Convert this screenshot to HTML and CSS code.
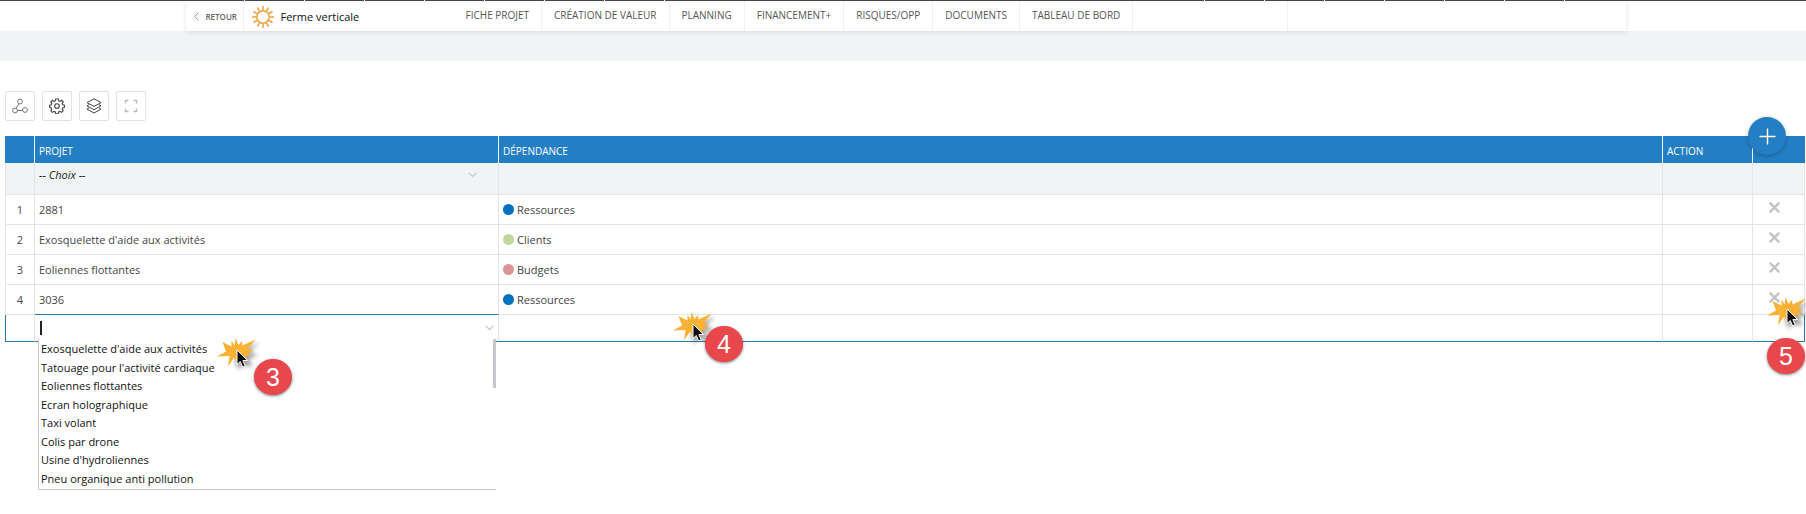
FILE: index.html
```html
<!DOCTYPE html>
<html lang="fr">
<head>
<meta charset="utf-8">
<title>Ferme verticale</title>
<link rel="stylesheet" href="styles.css">
</head>
<body>
<svg class="defs" aria-hidden="true">
  <defs>
    <symbol id="chevron" viewBox="0 0 9 6"><path d="M0.7 0.7 4.5 4.5 8.3 0.7" fill="none" stroke="#c9ced1" stroke-width="1.4"/></symbol>
    <symbol id="cross" viewBox="0 0 11 11"><path d="M1.4 1.4 9.6 9.6M9.6 1.4 1.4 9.6" fill="none" stroke="#c3c3c3" stroke-width="2.4" stroke-linecap="round"/></symbol>
    <symbol id="click" viewBox="0 0 48 38">
      <path d="M20 12 42 5 32 14 41 17 31 21 36 28 24 28 22 32 18 24Z" fill="#555" opacity=".55" filter="url(#soft)"/>
      <path d="M0 18.500 9 13.500 5.500 4 14.500 8.500 14.500 2.500 17.500 7.500 18.500 0 21.500 7 25 3 25.500 7.500 38.500 1.500 31 10.500 36.500 13 31 14 34 18 28.500 17.500 30 21 22 21 19.500 23.500 17 19.500 11 28.500 12.500 18Z" fill="#f9b233"/>
      <path d="M20 12V26.500L23.300 23.500 25.700 29 28.200 27.900 25.900 22.500H30.500Z" fill="#0b0b0b" stroke="#fff" stroke-width="1"/>
    </symbol>
    <filter id="soft" x="-30%" y="-30%" width="160%" height="160%"><feGaussianBlur stdDeviation="2"/></filter>
  </defs>
</svg>

<header class="header">
  <div class="ticks"><span class="ticks-left"></span><span class="ticks-right"></span></div>
  <div class="topbar">
    <a class="back" href="#"><svg viewBox="0 0 5 9" width="5" height="9" aria-hidden="true"><path d="M4.500 0.500 0.700 4.500 4.500 8.500" fill="none" stroke="#888" stroke-width="0.900"/></svg>RETOUR</a>
    <div class="title">
      <svg viewBox="0 0 24 24" width="24" height="24" aria-hidden="true"><g fill="none" stroke="#eaa13e" stroke-width="1.500"><circle cx="12" cy="12" r="6.200"/><path d="M12 5V1M12 19v4M5 12H1M19 12h4M15.500 5.900 17.500 2.500M8.500 18.100 6.500 21.500M5.900 8.500 2.500 6.500M18.100 15.500 21.500 17.500M8.500 5.900 6.500 2.500M15.500 18.100 17.500 21.500M5.900 15.500 2.500 17.500M18.100 8.500 21.500 6.500"/></g></svg>
      <span>Ferme verticale</span>
    </div>
    <nav class="nav">
      <a href="#">FICHE PROJET</a>
      <a href="#">CRÉATION DE VALEUR</a>
      <a href="#">PLANNING</a>
      <a href="#">FINANCEMENT+</a>
      <a href="#">RISQUES/OPP</a>
      <a href="#">DOCUMENTS</a>
      <a href="#">TABLEAU DE BORD</a>
      <span class="nav-blank"></span>
    </nav>
  </div>
</header>
<div class="band"></div>

<main class="main">
  <div class="toolbar">
    <button class="tool" aria-label="Liens"><svg viewBox="0 0 16 16" width="16" height="16"><g fill="none" stroke="#666" stroke-width="0.900"><circle cx="8" cy="3.500" r="2.400"/><circle cx="3" cy="12.500" r="2.400"/><circle cx="13" cy="12" r="2.400"/><path d="M7 5.700 4 10.300M5.400 12.500H10.600"/></g></svg></button>
    <button class="tool" aria-label="Paramètres"><svg viewBox="0 0 16 16" width="16" height="16"><g fill="none" stroke="#444" stroke-width="1.100"><circle cx="8" cy="8" r="2.300"/><path d="M6.700 1h2.600l.4 1.900 1.200.5 1.700-1.100 1.600 1.600-1 1.700.5 1.200 1.800.4v2.200l-1.800.5-.5 1.200 1 1.600-1.600 1.700-1.700-1-1.200.5-.4 1.900H6.700l-.4-1.900-1.200-.5-1.700 1-1.600-1.700 1-1.600-.5-1.200L.6 9.400V7.200l1.700-.4.500-1.200-1-1.700 1.600-1.600 1.700 1.100 1.200-.5Z"/></g></svg></button>
    <button class="tool" aria-label="Calques"><svg viewBox="0 0 16 16" width="16" height="16"><g fill="none" stroke="#444" stroke-width="1"><path d="M8 .8 15 4.600 8 8.400 1 4.600Z"/><path d="M3 6.600 1 7.900 8 11.700 15 7.900 13 6.600M3 9.900 1 11.200 8 15 15 11.200 13 9.900"/></g></svg></button>
    <button class="tool" aria-label="Plein écran"><svg viewBox="0 0 14 14" width="14" height="14"><path d="M1.500 4.500v-3h3M9.500 1.500h3v3M12.500 9.500v3h-3M4.500 12.500h-3v-3" fill="none" stroke="#bbb" stroke-width="1.400"/></svg></button>
  </div>

  <div class="grid">
    <button class="add" aria-label="Ajouter"><svg viewBox="0 0 17 17" width="17" height="17"><path d="M8.500 0.500v16M0.500 8.500h16" stroke="#fff" stroke-width="1.400"/></svg></button>
    <table class="table">
      <colgroup><col class="c-num"><col class="c-project"><col><col class="c-action"><col class="c-del"></colgroup>
      <thead>
        <tr><th></th><th>PROJET</th><th>DÉPENDANCE</th><th>ACTION</th><th></th></tr>
      </thead>
      <tbody>
        <tr class="filter">
          <td></td>
          <td><div class="pick"><select aria-label="Projet"><option>-- Choix --</option></select><svg class="chevron"><use href="#chevron"/></svg></div></td>
          <td></td><td></td><td></td>
        </tr>
        <tr><td class="num">1</td><td>2881</td><td><span class="tag"><i class="dot blue"></i>Ressources</span></td><td></td><td><button class="del" aria-label="Supprimer"><svg><use href="#cross"/></svg></button></td></tr>
        <tr><td class="num">2</td><td>Exosquelette d'aide aux activités</td><td><span class="tag"><i class="dot green"></i>Clients</span></td><td></td><td><button class="del" aria-label="Supprimer"><svg><use href="#cross"/></svg></button></td></tr>
        <tr><td class="num">3</td><td>Eoliennes flottantes</td><td><span class="tag"><i class="dot pink"></i>Budgets</span></td><td></td><td><button class="del" aria-label="Supprimer"><svg><use href="#cross"/></svg></button></td></tr>
        <tr class="last"><td class="num">4</td><td>3036</td><td><span class="tag"><i class="dot blue"></i>Ressources</span></td><td></td><td><button class="del" aria-label="Supprimer"><svg><use href="#cross"/></svg></button></td></tr>
        <tr class="edit">
          <td></td>
          <td>
            <div class="combo"><span class="caret"></span><input type="text" aria-label="Projet"><svg class="chevron"><use href="#chevron"/></svg></div>
            <ul class="menu" role="listbox" aria-label="Projets">
              <li role="option">Exosquelette d'aide aux activités</li>
              <li role="option">Tatouage pour l'activité cardiaque</li>
              <li role="option">Eoliennes flottantes</li>
              <li role="option">Ecran holographique</li>
              <li role="option">Taxi volant</li>
              <li role="option">Colis par drone</li>
              <li role="option">Usine d'hydroliennes</li>
              <li role="option">Pneu organique anti pollution</li>
            </ul>
            <div class="step step-3"><svg class="click"><use href="#click"/></svg><span class="badge">3</span></div>
          </td>
          <td><div class="step step-4"><svg class="click"><use href="#click"/></svg><span class="badge">4</span></div></td>
          <td></td>
          <td><div class="step step-5"><svg class="click"><use href="#click"/></svg><span class="badge">5</span></div></td>
        </tr>
      </tbody>
    </table>
  </div>
</main>
</body>
</html>
```

FILE: styles.css
```css
* { box-sizing: border-box; }

body {
  min-height: 100vh;
  margin: 0;
  background: #fff;
  color: #444;
  font: 11px/18px "Open Sans", "Noto Sans", sans-serif;
}

button, input, select { font: inherit; color: inherit; }
svg { display: block; }
.defs { position: absolute; width: 0; height: 0; }

/* Header */
.header { position: relative; padding-left: 5px; background: #fff; }

.ticks {
  position: absolute;
  inset: 0 0 auto;
  height: 1px;
  background: #444;
}
.ticks span {
  position: absolute;
  top: 0;
  height: 1px;
  background: repeating-linear-gradient(90deg, #fff 0 1px, transparent 1px 60px);
}
.ticks-left { left: 244px; width: 421px; }
.ticks-right { left: 1204px; width: 361px; }

.topbar {
  display: flex;
  max-width: 1440px;
  height: 31px;
  margin: 0 auto;
  box-shadow: 0 1px 5px rgba(0, 0, 0, 0.1);
}

.back {
  display: flex;
  align-items: center;
  gap: 7px;
  width: 58px;
  padding: 2px 0 0 8px;
  border-right: 1px solid #f0f0f0;
  color: #666;
  font-size: 8px;
  font-weight: 600;
  text-decoration: none;
}

.title {
  display: flex;
  align-items: center;
  gap: 6px;
  width: 210px;
  padding: 2px 0 0 7px;
  color: #111;
  font-size: 11px;
}

.nav { display: flex; }
.nav a, .nav-blank {
  padding: 6px 12px 0;
  border-right: 1px solid #f0f0f0;
  color: #555;
  font-size: 10px;
  text-decoration: none;
  white-space: nowrap;
}
.nav-blank { width: 155px; }

.band { height: 30px; background: #f0f4f5; }

/* Toolbar */
.main { padding: 30px 1px 172px 5px; overflow: hidden; }
.toolbar { display: flex; gap: 7px; margin-bottom: 15px; }
.tool {
  display: flex;
  align-items: center;
  justify-content: center;
  width: 30px;
  height: 30px;
  padding: 0;
  border: 1px solid #dfe3e5;
  border-radius: 2px;
  background: #fff;
}

/* Table */
.grid { position: relative; }

.add {
  position: absolute;
  z-index: 1;
  top: -19px;
  right: 19px;
  display: flex;
  align-items: center;
  justify-content: center;
  width: 38px;
  height: 38px;
  padding: 0;
  border: 0;
  border-radius: 50%;
  background: #247ec3;
  box-shadow: 0 1px 4px rgba(0, 0, 0, 0.25);
}

.table {
  width: 100%;
  table-layout: fixed;
  border-collapse: separate;
  border-spacing: 0;
}
.c-num { width: 30px; }
.c-project { width: 464px; }
.c-action { width: 90px; }
.c-del { width: 52px; }

th {
  height: 27px;
  padding: 2px 4px 0;
  border-right: 1px solid #fff;
  background: #247ec3;
  color: #fff;
  font-size: 10px;
  font-weight: 400;
  text-align: left;
}
th:last-child { border-right: 0; }

td {
  position: relative;
  height: 30px;
  padding: 0 4px;
  border-right: 1px solid #e2e4e6;
  border-bottom: 1px solid #e2e4e6;
}
td:first-child { border-left: 1px solid #e2e4e6; }
.num { text-align: center; }

.filter td { height: 32px; background: #f0f4f5; }
.pick { display: flex; align-items: center; padding: 0 17px 7px 0; }
.pick select {
  flex: 1;
  padding: 0;
  border: 0;
  background: transparent;
  color: #222;
  font-style: italic;
  appearance: none;
}
.chevron { width: 9px; height: 6px; }

.tag { display: flex; align-items: center; gap: 3px; }
.dot { width: 11px; height: 11px; border-radius: 50%; }
.blue { background: #0070c0; }
.green { background: #c3d69b; }
.pink { background: #d99694; }

.del {
  display: block;
  margin: 0 auto;
  padding: 0 9px 4px 0;
  border: 0;
  background: transparent;
}
.del svg { width: 11px; height: 11px; }

/* Row being edited */
.edit td { height: 27px; border-bottom-color: #2a76b0; }
.edit td:first-child { border-left-color: #2a76b0; }
.edit td:last-child { border-right-color: #2a76b0; }
.last td:nth-child(2) { border-bottom-color: #2a76b0; }

.combo { display: flex; align-items: center; }
.combo input {
  flex: 1;
  height: 20px;
  padding: 0 4px;
  border: 0;
  outline: 0;
  background: transparent;
}
.caret { width: 2px; height: 14px; margin-left: 1px; background: #222; }

.menu {
  position: absolute;
  z-index: 1;
  top: 24px;
  left: 3px;
  right: 2px;
  display: grid;
  grid-auto-rows: 1fr;
  height: 151px;
  margin: 0;
  padding: 1px 0 1px 2px;
  border-left: 1px solid #ccc;
  border-bottom: 1px solid #ccc;
  background: #fff;
  color: #111;
  list-style: none;
}
.menu::after {
  content: "";
  position: absolute;
  top: 0;
  right: 0;
  width: 3px;
  height: 49px;
  background: #c3c7cb;
}

/* Numbered click markers */
.step { position: absolute; z-index: 2; }
.click { width: 48px; height: 38px; }
.badge {
  position: absolute;
  width: 38px;
  height: 36px;
  border-radius: 50%;
  background: #e8474b;
  box-shadow: 0 1px 3px rgba(0, 0, 0, 0.5);
  color: #fff;
  font: 25px/36px "Liberation Sans", Arial, sans-serif;
  text-align: center;
}
.step-3 { top: 23px; left: 182px; }
.step-3 .badge { top: 21px; left: 37px; }
.step-4 { top: -3px; left: 174px; }
.step-4 .badge { top: 14px; left: 32px; }
.step-5 { top: -18px; right: -11px; }
.step-5 .badge { top: 41px; left: 0; }
```
